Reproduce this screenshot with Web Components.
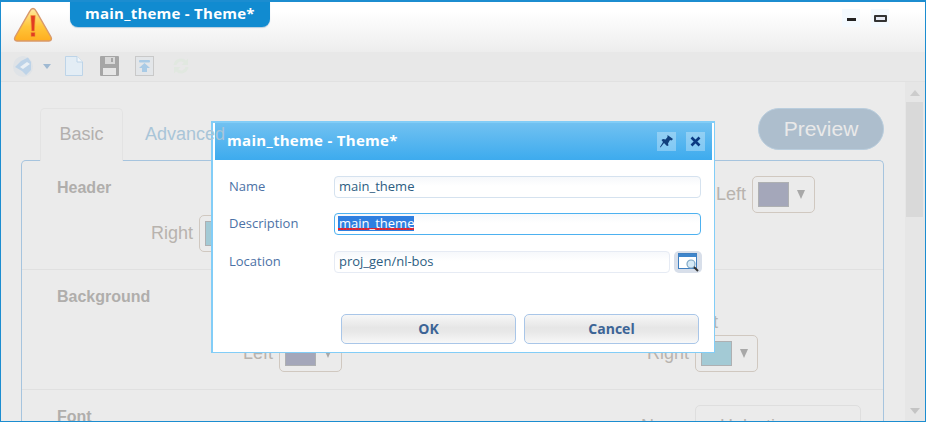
<!DOCTYPE html>
<html>
<head>
<meta charset="utf-8">
<title>main_theme - Theme*</title>
<style>
    html, body { margin: 0; height: 100%; overflow: hidden; background: #ebebeb; }
    body { font-family: "Liberation Sans", Arial, sans-serif; }
</style>
</head>
<body>
<app-window>
    <title-bar slot="title" caption="main_theme - Theme*"></title-bar>
    <tool-bar slot="tools"></tool-bar>
    <tab-panel>
        <theme-section heading="Header" height="109">
            <color-field label="Left" color="#a4a7ba" style="margin:-22px 0 0 682px"></color-field>
            <color-field label="Right" color="#a3cad5" style="margin:2px 0 0 129px"></color-field>
        </theme-section>
        <theme-section heading="Background" height="120">
            <color-field label="Left" bare style="margin:5px 0 0 654px"></color-field>
            <color-field label="Left" color="#a4a7ba" style="margin:2px 0 0 209px"></color-field>
            <color-field label="Right" color="#a3cad5" style="margin:-37px 0 0 625px"></color-field>
        </theme-section>
        <theme-section heading="Font" height="60" last>
            <name-field></name-field>
        </theme-section>
    </tab-panel>
    <scroll-rail slot="rail"></scroll-rail>
</app-window>
<theme-dialog caption="main_theme - Theme*"></theme-dialog>

<script>
// small helper, every element below just sets its own shadow html
function shadow(el, html) {
    el.attachShadow({ mode: 'open' }).innerHTML = html;
}

class AppWindow extends HTMLElement {
    connectedCallback() {
        shadow(this, `
            <style>
                :host {
                    display: grid;
                    grid-template-columns: 1fr 20px;
                    grid-template-rows: 50px 30px 1fr;
                    box-sizing: border-box;
                    width: 926px;
                    height: 422px;
                    border: solid #1c8dd0;
                    border-width: 2px 1px 1px 1px;
                    background: #ebebeb;
                    overflow: hidden;
                }
                .title { grid-column: 1 / 3; }
                .tools { grid-column: 1 / 3; }
                .body { overflow: hidden; min-width: 0; }
            </style>
            <div class="title"><slot name="title"></slot></div>
            <div class="tools"><slot name="tools"></slot></div>
            <div class="body"><slot></slot></div>
            <slot name="rail"></slot>
        `);
    }
}

class TitleBar extends HTMLElement {
    connectedCallback() {
        shadow(this, `
            <style>
                :host {
                    display: flex;
                    height: 50px;
                    background: linear-gradient(#ffffff 0%, #ffffff 18%, #ededed 100%);
                }
                .logo { margin: 5px 0 0 12px; width: 40px; height: 36px; flex: none; }
                .tab {
                    margin-left: 17px;
                    height: 25px;
                    width: 200px;
                    box-sizing: border-box;
                    padding-left: 15px;
                    background: #118bd0;
                    border-radius: 0 0 8px 8px;
                    box-shadow: 0 1px 1px rgba(60,130,180,.35);
                    color: #fff;
                    font: bold 15px/23px "Open Sans", sans-serif;
                    letter-spacing: 0.25px;
                    white-space: nowrap;
                }
                .ctl { display: flex; gap: 11px; margin: 7px 0 0 auto; padding-right: 36px; }
                .ctl div {
                    width: 18px; height: 18px;
                    background: #f4faff;
                    display: grid; place-items: center;
                }
                .min { width: 9px; height: 3px; background: #222; margin-top: 3px; }
                .max { width: 9px; height: 3px; border: 2px solid #333; border-top-width: 2px; background: #e6eaf4; border-radius: 1px; }
            </style>
            <svg class="logo" viewBox="0 0 40 36">
                <defs>
                    <linearGradient id="w" x1="0" y1="0" x2="0" y2="1">
                        <stop offset="0" stop-color="#ffe9a0"/>
                        <stop offset=".55" stop-color="#ffc63a"/>
                        <stop offset="1" stop-color="#ffad1f"/>
                    </linearGradient>
                </defs>
                <path d="M20 1.5 C21.5 1.5 22.3 2.5 23 3.8 L38 30 C39.2 32.5 38 34 36 34 L4 34 C2 34 .8 32.5 2 30 L17 3.8 C17.7 2.5 18.5 1.5 20 1.5 Z" fill="url(#w)" stroke="#d9996a" stroke-width="1.4"/>
                <path d="M17.8 8.5 H22.2 L21.4 24 H18.6 Z" fill="#e23b22" stroke="#f09030" stroke-width=".6"/>
                <rect x="18" y="25.5" width="4" height="4" fill="#e23b22" stroke="#f09030" stroke-width=".6"/>
            </svg>
            <div class="tab">${this.getAttribute('caption')}</div>
            <div class="ctl">
                <div><span class="min"></span></div>
                <div><span class="max"></span></div>
            </div>
        `);
    }
}

class ToolBar extends HTMLElement {
    connectedCallback() {
        shadow(this, `
            <style>
                :host {
                    display: flex;
                    align-items: center;
                    box-sizing: border-box;
                    height: 30px;
                    padding: 0 0 1px 12px;
                    background: #e8e8e8;
                    border-bottom: 1px solid #e1e1e1;
                }
                svg { display: block; flex: none; }
                .caret { width: 0; height: 0; border: 4.5px solid transparent; border-top: 5px solid #9fb9d2; border-bottom: 0; margin: 1px 14px 0 10px; }
            </style>
            <svg width="20" height="21" viewBox="0 0 20 21">
                <ellipse cx="10" cy="10.5" rx="10" ry="10.5" fill="#dfe3e7"/>
                <path d="M2 11 L8 5 L15 1.5 L18 6 L18 14 L13 19 L9 15 Z" fill="#bdd3e8"/>
                <path d="M7 11 L14 6 L17 8 L10 13 Z" fill="#eaf0f5"/>
            </svg>
            <span class="caret"></span>
            <svg width="18" height="20" viewBox="0 0 18 20">
                <path d="M.5.5 H12 L17.5 6 V19.5 H.5 Z" fill="#e3edf5" stroke="#bdd4e8"/>
                <path d="M12 .5 V6 H17.5" fill="#f2f6fa" stroke="#bdd4e8"/>
            </svg>
            <svg width="19" height="20" viewBox="0 0 19 20" style="margin-left:17px">
                <rect width="19" height="20" rx="1" fill="#a6a6a6"/>
                <rect x="5" y="1" width="10" height="7" fill="#d8d8d8"/>
                <rect x="11" y="2" width="2" height="4" fill="#a6a6a6"/>
                <rect x="3" y="12" width="13" height="7" fill="#e6e6e6"/>
            </svg>
            <svg width="19" height="20" viewBox="0 0 19 20" style="margin-left:16px">
                <rect x=".5" y=".5" width="18" height="19" fill="#e3e6e9" stroke="#c9c9c9"/>
                <rect x="4" y="4" width="11" height="2.4" rx="1" fill="#a9cbe6"/>
                <path d="M9.5 7 L15 12 H12 V16 H7 V12 H4 Z" fill="#a9cbe6"/>
            </svg>
            <svg width="18" height="18" viewBox="0 0 18 18" style="margin-left:18px">
                <path d="M1.5 8 A7.5 7.5 0 0 1 14 3.5 L16 1.5 V8 H9.5 L11.8 5.7 A4.5 4.5 0 0 0 4.5 8 Z" fill="#e1e8e0"/>
                <path d="M16.5 10 A7.5 7.5 0 0 1 4 14.5 L2 16.5 V10 H8.5 L6.2 12.3 A4.5 4.5 0 0 0 13.5 10 Z" fill="#e1e8e0"/>
            </svg>
        `);
    }
}

class TabPanel extends HTMLElement {
    connectedCallback() {
        shadow(this, `
            <style>
                :host { display: block; padding: 26px 0 0 20px; color: #b3b0ae; font-size: 18px; }
                .strip { display: flex; width: 863px; height: 52px; position: relative; z-index: 1; }
                .tab {
                    box-sizing: border-box;
                    width: 83px;
                    height: 53px;
                    margin-left: 19px;
                    border: 1px solid #e3e3e3;
                    border-bottom: 0;
                    border-radius: 5px 5px 0 0;
                    background: #ebebeb;
                    text-align: center;
                    line-height: 50px;
                }
                .other { margin-left: 22px; line-height: 52px; color: #a9c5d8; white-space: nowrap; }
                .preview {
                    margin: 0 0 0 auto;
                    width: 126px;
                    height: 42px;
                    box-sizing: border-box;
                    border: 1px solid #b9cddd;
                    border-radius: 21px;
                    background: #adbecd;
                    color: #e9e9e9;
                    font-size: 21px;
                    line-height: 40px;
                    text-align: center;
                }
                .panel {
                    box-sizing: border-box;
                    width: 863px;
                    height: 300px;
                    border: 1px solid #a6c4de;
                    border-bottom: 0;
                    border-radius: 5px 5px 0 0;
                }
            </style>
            <div class="strip">
                <div class="tab">Basic</div>
                <div class="other">Advanced</div>
                <div class="preview">Preview</div>
            </div>
            <div class="panel"><slot></slot></div>
        `);
    }
}

class ThemeSection extends HTMLElement {
    connectedCallback() {
        const last = this.hasAttribute('last');
        shadow(this, `
            <style>
                :host {
                    display: block;
                    box-sizing: border-box;
                    height: ${this.getAttribute('height')}px;
                    padding: 17px 0 0 0;
                    border-bottom: ${last ? '0' : '1px solid #e0e0e0'};
                    overflow: hidden;
                }
                h3 {
                    margin: 0 0 0 35px;
                    font: bold 16px/20px "Liberation Sans", sans-serif;
                    color: #b0aeac;
                    height: 20px;
                }
            </style>
            <h3>${this.getAttribute('heading')}</h3>
            <slot></slot>
        `);
    }
}

class ColorField extends HTMLElement {
    connectedCallback() {
        const bare = this.hasAttribute('bare');
        shadow(this, `
            <style>
                :host { display: block; width: max-content; }
                .wrap { display: flex; align-items: center; gap: 6px; }
                span { font-size: 18px; line-height: 21px; color: #b8b3ae; min-width: 42px; text-align: right; }
                .select {
                    box-sizing: border-box;
                    width: 63px;
                    height: 37px;
                    border: 1px solid #d0c8c0;
                    border-radius: 5px;
                    display: flex;
                    align-items: center;
                    padding-left: 5px;
                }
                .swatch { width: 31px; height: 25px; background: ${this.getAttribute('color')}; border: 1px solid #aeb0b2; box-sizing: border-box; }
                .arrow { width: 0; height: 0; margin-left: 8px; border: 4.5px solid transparent; border-top: 9px solid #a8a8a8; border-bottom: 0; }
            </style>
            <div class="wrap">
                <span>${this.getAttribute('label')}</span>
                ${bare ? '' : '<div class="select"><div class="swatch"></div><div class="arrow"></div></div>'}
            </div>
        `);
    }
}

class NameField extends HTMLElement {
    connectedCallback() {
        shadow(this, `
            <style>
                :host { display: flex; align-items: flex-start; margin: -22px 0 0 619px; color: #b8b3ae; font-size: 18px; }
                span { width: 54px; padding-top: 11px; }
                .box {
                    box-sizing: border-box;
                    width: 166px;
                    height: 38px;
                    border: 1px solid #dedede;
                    border-radius: 5px;
                    line-height: 36px;
                    padding: 2px 0 0 24px;
                    white-space: nowrap;
                    overflow: hidden;
                }
            </style>
            <span>Name</span>
            <div class="box">Helvetica</div>
        `);
    }
}

class ScrollRail extends HTMLElement {
    connectedCallback() {
        shadow(this, `
            <style>
                :host {
                    display: flex;
                    flex-direction: column;
                    align-items: center;
                    background: #e6e6e6;
                    padding-top: 8px;
                    padding-right: 1px;
                }
                .up, .down { width: 0; height: 0; border: 5px solid transparent; }
                .up { border-bottom: 6px solid #cccccc; border-top: 0; }
                .down { border-top: 6px solid #c4c4c4; border-bottom: 0; margin-top: auto; margin-bottom: 7px; }
                .thumb { width: 17px; height: 115px; margin-top: 6px; background: #d9d9d9; }
            </style>
            <div class="up"></div>
            <div class="thumb"></div>
            <div class="down"></div>
        `);
    }
}

class DialogField extends HTMLElement {
    connectedCallback() {
        const kind = this.getAttribute('kind') || '';
        const value = this.getAttribute('value');
        const inner = kind === 'focus' ? `<mark>${value}</mark>` : value;
        shadow(this, `
            <style>
                :host { display: flex; align-items: center; height: 22px; }
                label { width: 105px; flex: none; color: #4c72a6; font: 13px "Open Sans", sans-serif; margin-top: -3px; }
                .input {
                    box-sizing: border-box;
                    flex: none;
                    width: ${kind === 'browse' ? 336 : 367}px;
                    height: 22px;
                    border: 1px solid ${kind === 'focus' ? '#4db1f0' : kind === 'browse' ? '#e6ebf4' : '#d5e2ef'};
                    border-radius: 4px;
                    background: linear-gradient(#f6f8fb, #fff 45%);
                    color: #2d5d82;
                    font: 13px/19px "Open Sans", sans-serif;
                    padding-left: ${kind === 'focus' ? 3 : 4}px;
                    overflow: hidden;
                }
                /* selected text with the spell check squiggle along its foot */
                mark {
                    display: inline-block;
                    margin-top: 2px;
                    padding-left: 1px;
                    background:
                        repeating-linear-gradient(90deg, #e8202a 0 2px, #b03a60 2px 3px) left bottom 1px / 100% 2px no-repeat,
                        #2f7fe0;
                    color: #fff;
                    line-height: 15px;
                    vertical-align: top;
                }
                .browse {
                    box-sizing: border-box;
                    width: 28px;
                    height: 22px;
                    margin-left: 4px;
                    border-radius: 5px;
                    background: #d8dfea;
                    display: grid;
                    place-items: center;
                }
            </style>
            <label>${this.getAttribute('label')}</label>
            <div class="input">${inner}</div>
            ${kind === 'browse' ? `<div class="browse">
                <svg width="21" height="19" viewBox="0 0 21 19">
                    <rect x=".5" y=".5" width="18" height="15" fill="#fff" stroke="#3f7fc0"/>
                    <rect x="1" y="1" width="17" height="3" fill="#3f86cc"/>
                    <circle cx="13" cy="11" r="4" fill="#d5eaf7" stroke="#7fa6c4" stroke-width="1.2"/>
                    <path d="M16 14 L20 18" stroke="#333" stroke-width="2"/>
                </svg>
            </div>` : ''}
        `);
    }
}

class ThemeDialog extends HTMLElement {
    connectedCallback() {
        shadow(this, `
            <style>
                :host {
                    position: absolute;
                    left: 211px;
                    top: 121px;
                    box-sizing: border-box;
                    width: 504px;
                    height: 232px;
                    border: 2px solid #82cdf7;
                    border-right-width: 1px;
                    border-bottom-width: 1px;
                    background: #fff;
                    padding: 0 2px 0 2px;
                }
                header {
                    display: flex;
                    align-items: center;
                    box-sizing: border-box;
                    height: 37px;
                    padding-left: 12px;
                    background: linear-gradient(#71c1f1, #3dabee);
                    color: #fff;
                    font: bold 15px "Open Sans", sans-serif;
                    letter-spacing: 0.3px;
                }
                header span { margin-top: -3px; }
                .btn {
                    width: 19px; height: 19px;
                    background: rgba(255,255,255,.3);
                    display: grid; place-items: center;
                }
                .pin { margin-left: auto; }
                .close { margin: 0 7px 0 10px; }
                .fields { display: flex; flex-direction: column; gap: 15px; padding: 16px 0 0 14px; }
                .fields dialog-field:last-child { margin-top: 1px; }
                footer { display: flex; gap: 8px; padding: 41px 0 0 126px; }
                button {
                    all: unset;
                    box-sizing: border-box;
                    width: 175px;
                    height: 30px;
                    border: 1px solid #a9c6e8;
                    border-radius: 5px;
                    background: linear-gradient(#f7f7f7, #e6e6e6 45%, #e8e8e8 60%, #f8f8f8);
                    color: #3c6496;
                    font: bold 14px/28px "Open Sans", sans-serif;
                    text-align: center;
                }
            </style>
            <header>
                <span>${this.getAttribute('caption')}</span>
                <div class="btn pin">
                    <svg width="15" height="15" viewBox="0 0 15 15"><path d="M8.5 1 L14 5 L12.5 6.5 L11 6 L9 9.5 L9.5 11.5 L8 12 L5 9 L1.5 13.5 L1 13 L4 8 L2.5 6 L4 5 L6.5 5.5 L8.5 3 Z" fill="#103f7d"/></svg>
                </div>
                <div class="btn close">
                    <svg width="11" height="11" viewBox="0 0 11 11"><path d="M1.5 1.5 L9.5 9.5 M9.5 1.5 L1.5 9.5" stroke="#0b3a82" stroke-width="2.6"/></svg>
                </div>
            </header>
            <div class="fields">
                <dialog-field label="Name" value="main_theme"></dialog-field>
                <dialog-field label="Description" value="main_theme" kind="focus"></dialog-field>
                <dialog-field label="Location" value="proj_gen/nl-bos" kind="browse"></dialog-field>
            </div>
            <footer>
                <button>OK</button>
                <button>Cancel</button>
            </footer>
        `);
    }
}

customElements.define('app-window', AppWindow);
customElements.define('title-bar', TitleBar);
customElements.define('tool-bar', ToolBar);
customElements.define('tab-panel', TabPanel);
customElements.define('theme-section', ThemeSection);
customElements.define('color-field', ColorField);
customElements.define('name-field', NameField);
customElements.define('scroll-rail', ScrollRail);
customElements.define('dialog-field', DialogField);
customElements.define('theme-dialog', ThemeDialog);
</script>
</body>
</html>
